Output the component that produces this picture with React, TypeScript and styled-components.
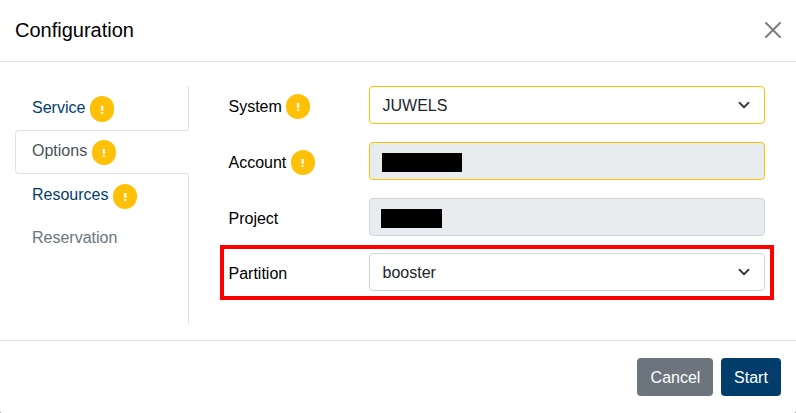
import React from "react";
import styled, { createGlobalStyle } from "styled-components";

const GlobalStyle = createGlobalStyle`
  *, *::before, *::after { box-sizing: border-box; }
  body {
    margin: 0;
    background: #7f7f7f;
    color: #000;
    font: 16px/24px "Liberation Sans", Arial, sans-serif;
  }
`;

const Modal = styled.div`
  display: flex;
  flex-direction: column;
  width: 796px;
  height: 413px;
  background: #fff;
  border-radius: 0 0 2px 2px;
  overflow: hidden;
`;

const Header = styled.header`
  display: flex;
  align-items: center;
  justify-content: space-between;
  flex: none;
  height: 62px;
  padding: 0 15px 2px;
  border-bottom: 1px solid #dee2e6;
`;

const Title = styled.h5`
  margin: 0;
  font-size: 20px;
  line-height: 30px;
  font-weight: 400;
`;

const CloseButton = styled.button`
  display: flex;
  padding: 0;
  border: 0;
  background: none;
  opacity: 0.5;
`;

const Body = styled.div`
  display: flex;
  flex: 1;
  padding: 24px 22px 16px 15px;
`;

const Tabs = styled.nav`
  display: flex;
  flex-direction: column;
  width: 174px;
  border-right: 1px solid #dee2e6;
`;

const Tab = styled.a<{ $state?: "active" | "disabled"; $height: number; $top?: number }>`
  display: flex;
  align-items: flex-start;
  height: ${(p) => p.$height}px;
  margin-right: -1px;
  padding: ${(p) => p.$top ?? 8}px 16px 0;
  border: 1px solid transparent;
  border-color: ${(p) => (p.$state === "active" ? "#dee2e6 #fff #dee2e6 #dee2e6" : "transparent")};
  border-radius: 4px 0 0 4px;
  color: ${(p) =>
    p.$state === "active" ? "#495057" : p.$state === "disabled" ? "#6c757d" : "#023d6b"};
`;

const Badge = styled.span<{ $top?: number; $height?: number }>`
  display: inline-flex;
  align-items: center;
  justify-content: center;
  flex: none;
  width: 24px;
  height: ${(p) => p.$height ?? 25}px;
  margin: ${(p) => p.$top ?? 0}px 0 0 5px;
  padding-top: 1px;
  border-radius: 12px;
  background: #ffc107;
  color: #fff;
  font-family: "Open Sans", sans-serif;
  font-size: 10.5px;
  line-height: 12px;
  font-weight: 800;
`;

const Form = styled.div`
  flex: 1;
  display: flex;
  flex-direction: column;
  margin-left: 31px;
`;

const Row = styled.div<{ $highlight?: boolean }>`
  display: flex;
  align-items: center;
  height: ${(p) => (p.$highlight ? 55 : 38)}px;
  margin-bottom: ${(p) => (p.$highlight ? 0 : 18)}px;
  border: 0 solid #f00;
  border-width: ${(p) => (p.$highlight ? 4 : 0)}px;
  padding: ${(p) => (p.$highlight ? "0 5px 1px 4px" : "0 9px 0 8px")};
  ${(p) => p.$highlight && "margin-top: -9px;"}
`;

const Label = styled.label`
  display: flex;
  align-items: center;
  width: 141px;
  height: 27px;
  padding: 3px 0 0 0.5px;
`;

const LabelBadge = styled(Badge)`
  margin: 0 0 0 4.4px;
`;

const Control = styled.div<{ $warning?: boolean; $disabled?: boolean }>`
  display: flex;
  align-items: center;
  justify-content: space-between;
  flex: 1;
  height: 38px;
  padding: 0 12px 0 12.5px;
  border: 1px solid ${(p) => (p.$warning ? "#ffc107" : "#ced4da")};
  border-radius: 4px;
  background: ${(p) => (p.$disabled ? "#e9ecef" : "#fff")};
  color: #212529;
`;

const Value = styled.span`
  padding-top: 2px;
`;

const Redaction = styled.span<{ $width: number; $shift: number }>`
  width: ${(p) => p.$width}px;
  height: 19px;
  margin-left: ${(p) => p.$shift}px;
  margin-top: 2px;
  background: #000;
`;

const Footer = styled.footer`
  display: flex;
  justify-content: flex-end;
  gap: 8px;
  flex: none;
  height: 73px;
  padding: 17px 15px 0;
  border-top: 1px solid #dee2e6;
`;

const Button = styled.button<{ $primary?: boolean }>`
  width: ${(p) => (p.$primary ? 60 : 76)}px;
  height: 38px;
  padding: 2px 0 0 ${(p) => (p.$primary ? 0 : 1)}px;
  border: 0;
  border-radius: 4px;
  background: ${(p) => (p.$primary ? "#023d6b" : "#6c757d")};
  color: #fff;
  font: inherit;
`;

const Chevron = () => (
  <svg width="16" height="12" viewBox="0 0 16 16" fill="none" stroke="#343a40" strokeWidth="2.4" strokeLinecap="round" strokeLinejoin="round">
    <path d="m2 5 6 6 6-6" />
  </svg>
);

const CloseIcon = () => (
  <svg width="16" height="16" viewBox="0 0 16 16" fill="#000">
    <path d="M.293.293a1 1 0 011.414 0L8 6.586 14.293.293a1 1 0 111.414 1.414L9.414 8l6.293 6.293a1 1 0 01-1.414 1.414L8 9.414l-6.293 6.293a1 1 0 01-1.414-1.414L6.586 8 .293 1.707a1 1 0 010-1.414z" />
  </svg>
);

export default function App() {
  return (
    <>
      <GlobalStyle />
      <Modal role="dialog">
        <Header>
          <Title>Configuration</Title>
          <CloseButton aria-label="Close"><CloseIcon /></CloseButton>
        </Header>
        <Body>
          <Tabs>
            <Tab $height={44} $top={9}>Service<Badge $height={26}>!</Badge></Tab>
            <Tab $height={44} $state="active">Options<Badge $top={1}>!</Badge></Tab>
            <Tab $height={43}>Resources<Badge $top={1}>!</Badge></Tab>
            <Tab $height={43} $state="disabled">Reservation</Tab>
          </Tabs>
          <Form>
            <Row>
              <Label>System<LabelBadge>!</LabelBadge></Label>
              <Control $warning><Value>JUWELS</Value><Chevron /></Control>
            </Row>
            <Row>
              <Label>Account<LabelBadge>!</LabelBadge></Label>
              <Control $warning $disabled><Redaction $width={80} $shift={-0.5} /></Control>
            </Row>
            <Row>
              <Label>Project</Label>
              <Control $disabled><Redaction $width={61} $shift={-1.5} /></Control>
            </Row>
            <Row $highlight>
              <Label>Partition</Label>
              <Control><Value>booster</Value><Chevron /></Control>
            </Row>
          </Form>
        </Body>
        <Footer>
          <Button>Cancel</Button>
          <Button $primary>Start</Button>
        </Footer>
      </Modal>
    </>
  );
}
